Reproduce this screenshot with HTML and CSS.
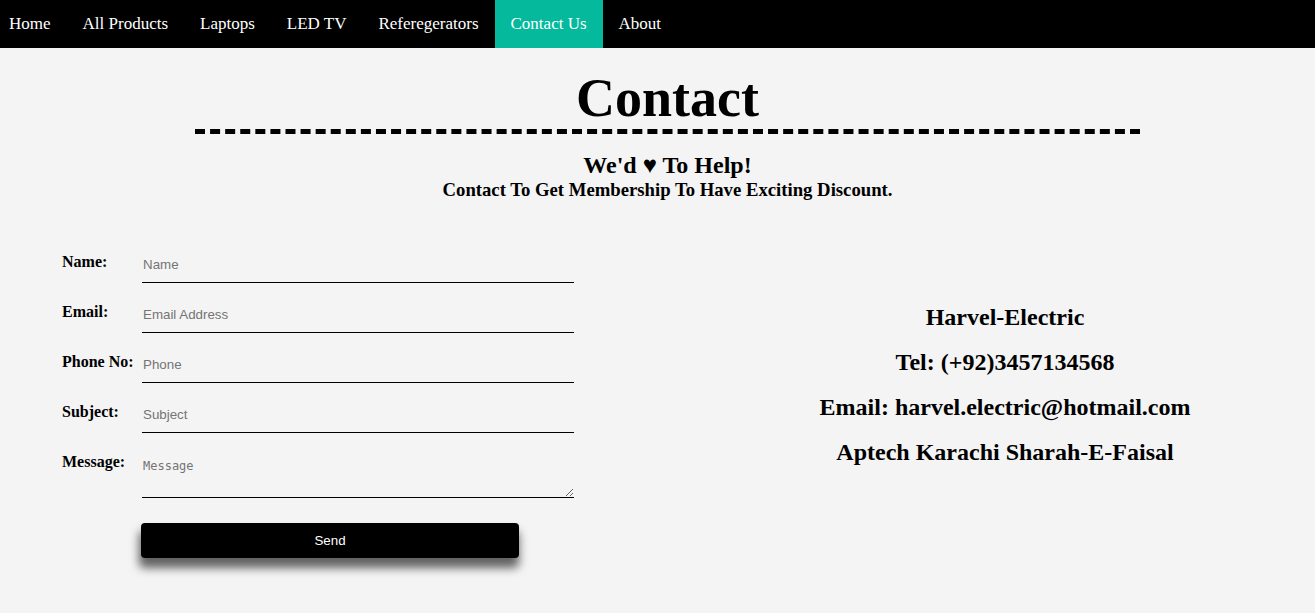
FILE: index.html
```html
<!DOCTYPE html>
<html lang="en">
<head>
<meta charset="utf-8">
<title>Contact</title>
<link rel="stylesheet" href="styles.css">
</head>
<body>
<nav class="topnav">
  <a href="#" class="nav-link first">Home</a>
  <a href="#" class="nav-link">All Products</a>
  <a href="#" class="nav-link">Laptops</a>
  <a href="#" class="nav-link">LED TV</a>
  <a href="#" class="nav-link">Referegerators</a>
  <a href="#" class="nav-link active">Contact Us</a>
  <a href="#" class="nav-link">About</a>
</nav>

<header class="intro">
  <h1 class="title">Contact</h1>
  <div class="dash"></div>
  <h2 class="tagline">We'd &#9829; To Help!</h2>
  <h3 class="subline">Contact To Get Membership To Have Exciting Discount.</h3>
</header>

<main class="contact">
  <form class="form">
    <div class="row">
      <label class="label" for="name">Name:</label>
      <input class="field" id="name" type="text" placeholder="Name">
    </div>
    <div class="row">
      <label class="label" for="email">Email:</label>
      <input class="field" id="email" type="email" placeholder="Email Address">
    </div>
    <div class="row">
      <label class="label" for="phone">Phone No:</label>
      <input class="field" id="phone" type="text" placeholder="Phone">
    </div>
    <div class="row">
      <label class="label" for="subject">Subject:</label>
      <input class="field" id="subject" type="text" placeholder="Subject">
    </div>
    <div class="row">
      <label class="label" for="message">Message:</label>
      <textarea class="area" id="message" placeholder="Message"></textarea>
    </div>
    <div class="row">
      <span class="label"></span>
      <button class="send" type="button">Send</button>
    </div>
  </form>

  <section class="info">
    <p class="info-line">Harvel-Electric</p>
    <p class="info-line">Tel: (+92)3457134568</p>
    <p class="info-line">Email: harvel.electric@hotmail.com</p>
    <p class="info-line">Aptech Karachi Sharah-E-Faisal</p>
  </section>
</main>
</body>
</html>
```

FILE: styles.css
```css
* { box-sizing: border-box; }

body {
  margin: 0;
  background: #f4f4f4;
  font-family: "Liberation Serif", "Times New Roman", serif;
  color: #000;
}

.topnav {
  display: flex;
  height: 48px;
  background: #000;
}

.nav-link {
  display: block;
  padding: 0 16px;
  line-height: 48px;
  font-size: 17px;
  color: #fff;
  text-decoration: none;
}

.nav-link.first { padding-left: 9px; }

.nav-link.active { background: #04b99c; }

.intro {
  margin-left: 20px;
  text-align: center;
}

.title {
  margin: 19px 0 0;
  font-size: 54px;
  line-height: 62px;
  font-weight: bold;
}

.dash {
  width: 945px;
  margin: 0 auto;
  height: 0;
  border-top: 5px dashed #000;
}

.tagline {
  margin: 18px 0 0;
  font-size: 24px;
  line-height: 27px;
  font-weight: bold;
}

.subline {
  margin: 0;
  font-size: 18.72px;
  line-height: 21px;
  font-weight: bold;
}

.contact {
  display: flex;
  margin-top: 48px;
  padding-bottom: 40px;
}

.form {
  width: 695px;
  padding-left: 62px;
  display: flex;
  flex-direction: column;
  gap: 15px;
}

.row {
  display: flex;
  align-items: flex-start;
}

.label {
  width: 80px;
  flex: none;
  padding-top: 5px;
  font-size: 16px;
  font-weight: bold;
  line-height: 18px;
}

.field {
  width: 432px;
  height: 35px;
  padding: 0 1px 1px;
  border: none;
  border-bottom: 1px solid #000;
  background: transparent;
  font-family: "Liberation Sans", Arial, sans-serif;
  font-size: 13.33px;
  color: #000;
  outline: none;
}

.field::placeholder,
.area::placeholder { color: #757575; }

.area {
  width: 432px;
  height: 50px;
  padding: 11px 1px 7px;
  border: none;
  border-bottom: 1px solid #000;
  background: transparent;
  font-family: "DejaVu Sans Mono", monospace;
  font-size: 12px;
  outline: none;
}

.send {
  margin-top: 10px;
  margin-left: -1px;
  width: 378px;
  height: 35px;
  border: none;
  border-radius: 4px;
  background: #000;
  color: #fff;
  font-family: "Liberation Sans", Arial, sans-serif;
  font-size: 13.33px;
  box-shadow: -1px 9px 10px 1px rgba(0, 0, 0, 0.6);
  cursor: pointer;
}

.info {
  flex: 1;
  text-align: center;
  padding-top: 56px;
}

.info-line {
  margin: 0 0 18px;
  font-size: 24px;
  line-height: 27px;
  font-weight: bold;
}
```
